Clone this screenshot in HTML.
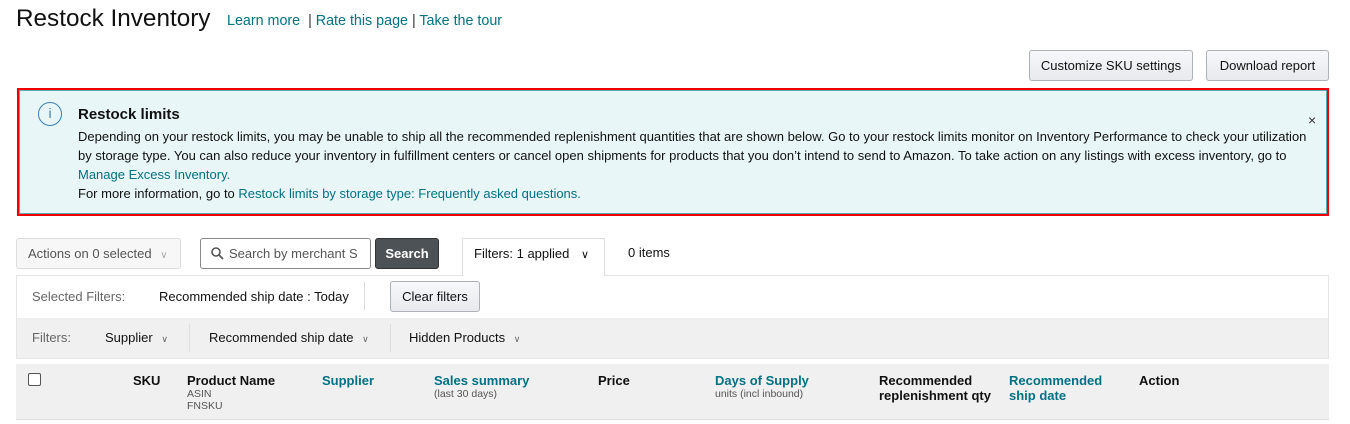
<!DOCTYPE html>
<html><head><style>
*{margin:0;padding:0;box-sizing:border-box}
body{width:1350px;height:424px;overflow:hidden;background:#fff;font-family:"Liberation Sans",sans-serif;color:#111;position:relative;font-size:13px}
.a{position:absolute;white-space:nowrap}
a,.l{color:#007185;text-decoration:none}
.btn{position:absolute;border:1px solid #adb1b8;border-radius:3px;background:linear-gradient(#f7f8fa,#e7e9ec);font-size:13px;text-align:center}
.hd{font-weight:bold;font-size:13px}
.sub{font-size:10.5px;color:#555}
</style></head><body>
<div class="a" style="left:16px;top:5px;font-size:24.3px;color:#111">Restock Inventory</div>
<div class="a" style="left:227px;top:13px;font-size:14.3px"><span class="l">Learn more</span> &nbsp;<span style="color:#333">|</span> <span class="l">Rate this page</span> <span style="color:#333">|</span> <span class="l">Take the tour</span></div>
<div class="btn" style="left:1029px;top:50px;width:164px;height:31px;line-height:29px">Customize SKU settings</div>
<div class="btn" style="left:1206px;top:50px;width:123px;height:31px;line-height:29px">Download report</div>
<div class="a" style="left:17px;top:88px;width:1312px;height:128px;border:2px solid #e00;background:#e9f6f7;box-shadow:inset 0 0 0 1px #5aa9b3"></div>
<div class="a" style="left:38px;top:102px;width:24px;height:24px;border:1.5px solid #3a7fb0;border-radius:50%;color:#3a7fb0;font-size:14px;text-align:center;line-height:21px">i</div>
<div class="a" style="left:78px;top:106px;font-size:15px;font-weight:bold">Restock limits</div>
<div class="a" style="left:78px;top:127px;font-size:13px;line-height:19px;color:#111">Depending on your restock limits, you may be unable to ship all the recommended replenishment quantities that are shown below. Go to your restock limits monitor on Inventory Performance to check your utilization<br>by storage type. You can also reduce your inventory in fulfillment centers or cancel open shipments for products that you don’t intend to send to Amazon. To take action on any listings with excess inventory, go to<br><span class="l">Manage Excess Inventory.</span><br>For more information, go to <span class="l">Restock limits by storage type: Frequently asked questions.</span></div>
<div class="a" style="left:1308px;top:112px;font-size:14px;color:#333">×</div>
<div class="a" style="left:16px;top:238px;width:165px;height:31px;border:1px solid #ddd;border-radius:3px;background:#f7f7f7;color:#555;padding-left:11px;line-height:29px">Actions on 0 selected <span style="color:#aaa;font-size:10px;margin-left:5px">∨</span></div>
<div class="a" style="left:200px;top:238px;width:171px;height:31px;border:1px solid #888;border-radius:3px;color:#555;padding-left:10px;line-height:29px"><svg width="13" height="13" style="vertical-align:-2px;margin-right:5px"><circle cx="5" cy="5" r="4" fill="none" stroke="#555" stroke-width="1.6"/><path d="M8 8l4 4" stroke="#555" stroke-width="1.8"/></svg>Search by merchant S</div>
<div class="a" style="left:375px;top:238px;width:64px;height:31px;border-radius:3px;background:#4d5257;border:1px solid #333;color:#fff;font-weight:bold;text-align:center;line-height:29px">Search</div>
<div class="a" style="left:462px;top:238px;width:143px;height:38px;border:1px solid #ddd;border-bottom:none;background:#fff;padding-left:11px;line-height:30px;z-index:2">Filters: 1 applied <span style="font-size:11px;margin-left:8px">∨</span></div>
<div class="a" style="left:628px;top:245px">0 items</div>
<div class="a" style="left:16px;top:275px;width:1313px;height:84px;border:1px solid #e5e5e5"></div>
<div class="a" style="left:32px;top:289px;color:#666">Selected Filters:</div>
<div class="a" style="left:159px;top:289px">Recommended ship date : Today</div>
<div class="a" style="left:364px;top:282px;width:1px;height:28px;background:#ddd"></div>
<div class="btn" style="left:390px;top:281px;width:90px;height:31px;line-height:29px">Clear filters</div>
<div class="a" style="left:17px;top:318px;width:1311px;height:40px;background:#f0f0f0"></div>
<div class="a" style="left:32px;top:330px;color:#666">Filters:</div>
<div class="a" style="left:105px;top:330px">Supplier <span style="font-size:9px;color:#666;margin-left:5px">∨</span></div>
<div class="a" style="left:189px;top:324px;width:1px;height:28px;background:#ddd"></div>
<div class="a" style="left:209px;top:330px">Recommended ship date <span style="font-size:9px;color:#666;margin-left:5px">∨</span></div>
<div class="a" style="left:390px;top:324px;width:1px;height:28px;background:#ddd"></div>
<div class="a" style="left:409px;top:330px">Hidden Products <span style="font-size:9px;color:#666;margin-left:5px">∨</span></div>
<div class="a" style="left:16px;top:364px;width:1313px;height:56px;background:#f0f0f0;border-bottom:1px solid #ddd"></div>
<div class="a" style="left:28px;top:373px;width:13px;height:13px;border:1px solid #555;border-radius:2px;background:#fff"></div>
<div class="a hd" style="left:133px;top:373px">SKU</div>
<div class="a hd" style="left:187px;top:373px">Product Name</div>
<div class="a sub" style="left:187px;top:388px;line-height:12px">ASIN<br>FNSKU</div>
<div class="a hd l" style="left:322px;top:373px">Supplier</div>
<div class="a hd l" style="left:434px;top:373px">Sales summary</div>
<div class="a sub" style="left:434px;top:388px">(last 30 days)</div>
<div class="a hd" style="left:598px;top:373px">Price</div>
<div class="a hd l" style="left:715px;top:373px">Days of Supply</div>
<div class="a sub" style="left:715px;top:388px">units (incl inbound)</div>
<div class="a hd" style="left:879px;top:373px;line-height:15px">Recommended<br>replenishment qty</div>
<div class="a hd l" style="left:1009px;top:373px;line-height:15px">Recommended<br>ship date</div>
<div class="a hd" style="left:1139px;top:373px">Action</div>
</body></html>
